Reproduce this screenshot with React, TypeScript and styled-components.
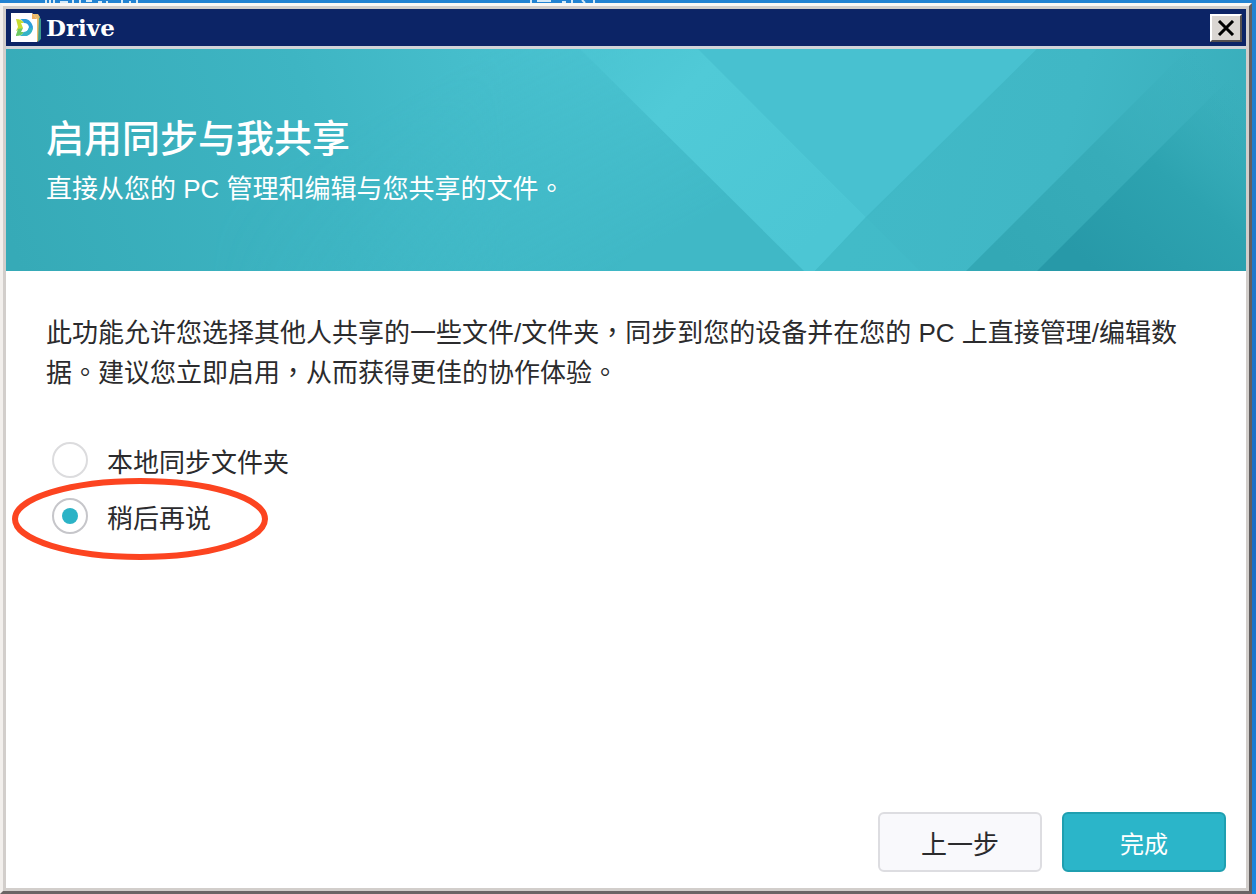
import React, { useState } from "react";
import styled, { createGlobalStyle } from "styled-components";

const GlobalStyle = createGlobalStyle`
  *, *::before, *::after { box-sizing: border-box; }
  body {
    margin: 0;
    font-family: "Liberation Sans", "Noto Sans CJK TC", sans-serif;
    color: #2b2b2d;
  }
  button, input { font: inherit; }
`;

const Desktop = styled.div`
  display: flex;
  flex-direction: column;
  min-height: 100vh;
  padding-right: 4px;
  background: linear-gradient(#2383d2, #1c6cc4 60%, #1c86dc);
`;

const DesktopStrip = styled.svg`
  display: block;
  width: 100%;
  height: 3px;
`;

const Window = styled.main`
  flex: 1;
  display: flex;
  flex-direction: column;
  background: #fff;
  border: 3px solid #d4d0cc;
  border-top-color: #fbf8f5;
  border-left-color: #f2efec;
  border-right-color: #625e5e;
  border-bottom-color: #6a6464;
`;

const Frame = styled.div`
  flex: 1;
  display: flex;
  flex-direction: column;
  border: 3px solid #d2cecb;
`;

const TitleBar = styled.header`
  display: flex;
  align-items: center;
  gap: 4px;
  height: 40px;
  padding: 0 4px;
  background: #0c2466;
  border-bottom: 3px solid #d2d4d8;
`;

const WindowTitle = styled.span`
  flex: 1;
  color: #fff;
  font-family: "DejaVu Serif", serif;
  font-size: 23px;
  font-weight: 700;
  line-height: 28px;
`;

const CloseButton = styled.button`
  display: grid;
  place-items: center;
  width: 32px;
  height: 28px;
  padding: 0;
  background: #dad6d2;
  border: 2px solid #fff;
  border-right-color: #55504f;
  border-bottom-color: #55504f;
`;

const Hero = styled.section`
  display: grid;
  height: 222px;
  overflow: hidden;
  background: #3eb6c4;
`;

const HeroArt = styled.svg`
  grid-area: 1 / 1;
  width: 100%;
  height: 222px;
`;

const HeroText = styled.div`
  grid-area: 1 / 1;
  display: flex;
  flex-direction: column;
  gap: 4px;
  padding: 64px 40px 0;
  color: #fff;
  z-index: 1;
`;

const Heading = styled.h1`
  margin: 0;
  font-size: 38px;
  font-weight: 500;
  line-height: 52px;
`;

const Text = styled.p`
  margin: 0;
  font-size: 26px;
  line-height: 40px;
`;

const Content = styled.section`
  flex: 1;
  padding: 42px 56px 20px 40px;
`;

const Options = styled.fieldset`
  display: flex;
  flex-direction: column;
  gap: 16px;
  margin: 0;
  padding: 47px 0 0 6px;
  border: 0;
`;

const Option = styled.label`
  position: relative;
  display: flex;
  align-items: center;
  align-self: flex-start;
  gap: 19px;
  height: 40px;
  font-size: 26px;
  line-height: 40px;
`;

const OptionText = styled.span`
  padding-top: 6px;
`;

const Radio = styled.input`
  appearance: none;
  display: grid;
  place-items: center;
  width: 36px;
  height: 36px;
  margin: 0;
  background: #fff;
  border: 2px solid #dcdcde;
  border-radius: 50%;

  &:checked { border-color: #c6c6ca; }
  &:checked::before {
    content: "";
    width: 16px;
    height: 16px;
    border-radius: 50%;
    background: #2bb3c6;
  }
`;

const Marker = styled.svg`
  position: absolute;
  left: -40px;
  top: -19px;
  width: 256px;
  height: 84px;
  pointer-events: none;
`;

const Footer = styled.footer`
  display: flex;
  justify-content: flex-end;
  gap: 20px;
  padding: 0 20px 16px;
`;

const Button = styled.button<{ $primary?: boolean }>`
  width: 164px;
  height: 60px;
  padding: 0;
  border: 2px solid ${(p) => (p.$primary ? "#1f9fb0" : "#dddde1")};
  border-radius: 6px;
  background: ${(p) => (p.$primary ? "#2bb5c9" : "#f9f9fc")};
  color: ${(p) => (p.$primary ? "#fff" : "#2b2b2d")};
  font-size: ${(p) => (p.$primary ? "24px" : "26px")};
`;

const DriveLogo = () => (
  <svg width="32" height="30" viewBox="0 0 32 30" aria-hidden="true">
    <path d="M22 1h6l2 3v22l-3 3h-5z" fill="#e8bc6c" />
    <path d="M29 4l2 2v20l-3 3z" fill="#3a9a8c" />
    <path d="M1 0h21l5 6v23H1z" fill="#fff" />
    <path d="M22 0l5 6h-5z" fill="#f0b060" />
    <path d="M6 6c4 0 6 1 8 4h-3l2 5-7 3 2-4z" fill="#c8dc30" />
    <path d="M6 22l2-6 5-1-2 4h3c-2 3-4 4-8 4z" fill="#6cc860" />
    <path d="M10 6h6c4 1 6 4 7 8-1 5-3 8-7 9h-6c2-1 3-2 4-4 3 0 4-2 5-5-1-3-2-4-5-4-1-2-2-3-4-4z" fill="#2c9fdc" />
    <path d="M10 23c2-1 3-2 4-4 2 0 4-1 5-4h4c-1 5-3 7-7 8z" fill="#34b4c8" />
  </svg>
);

const HeroPattern = () => (
  <HeroArt viewBox="0 0 1240 222" preserveAspectRatio="xMaxYMid slice" aria-hidden="true">
    <defs>
      <linearGradient id="base" gradientUnits="userSpaceOnUse" x1="0" y1="180" x2="620" y2="-20">
        <stop offset="0" stopColor="#36aab7" />
        <stop offset="0.5" stopColor="#3eb5c3" />
        <stop offset="1" stopColor="#4dc6d4" />
      </linearGradient>
      <linearGradient id="shade" gradientUnits="userSpaceOnUse" x1="480" y1="0" x2="600" y2="222">
        <stop offset="0" stopColor="#3fb7c5" stopOpacity="0" />
        <stop offset="1" stopColor="#3fb7c5" />
      </linearGradient>
      <linearGradient id="band" gradientUnits="userSpaceOnUse" x1="600" y1="0" x2="800" y2="200">
        <stop offset="0" stopColor="#50cad7" stopOpacity="0.4" />
        <stop offset="0.3" stopColor="#50cad7" />
        <stop offset="1" stopColor="#4cc6d4" />
      </linearGradient>
      <linearGradient id="right" gradientUnits="userSpaceOnUse" x1="900" y1="0" x2="1240" y2="100">
        <stop offset="0" stopColor="#41b9c7" />
        <stop offset="0.5" stopColor="#40b7c5" />
        <stop offset="1" stopColor="#39aebb" />
      </linearGradient>
      <linearGradient id="fold" gradientUnits="userSpaceOnUse" x1="1010" y1="222" x2="1210" y2="20">
        <stop offset="0" stopColor="#33a8b5" />
        <stop offset="0.5" stopColor="#37acb9" />
        <stop offset="1" stopColor="#39aebb" stopOpacity="0" />
      </linearGradient>
      <linearGradient id="corner" gradientUnits="userSpaceOnUse" x1="1090" y1="222" x2="1240" y2="40">
        <stop offset="0" stopColor="#2799a8" />
        <stop offset="0.5" stopColor="#2da3b0" />
        <stop offset="1" stopColor="#36acb8" stopOpacity="0" />
      </linearGradient>
      <linearGradient id="shadeReach" x1="0" y1="0" x2="1" y2="0">
        <stop offset="0" stopColor="#000" />
        <stop offset="1" stopColor="#fff" />
      </linearGradient>
      <mask id="shadeMask" maskUnits="userSpaceOnUse" x="0" y="0" width="1240" height="222">
        <rect x="200" width="300" height="222" fill="url(#shadeReach)" />
        <rect x="500" width="740" height="222" fill="#fff" />
      </mask>
    </defs>
    <rect width="1240" height="222" fill="url(#base)" />
    <rect width="1240" height="222" fill="url(#shade)" mask="url(#shadeMask)" opacity="0.9" />
    <path d="M692 0H1031L860 168z" fill="#48c1d0" />
    <path d="M574 0H692L860 168L809 222H798z" fill="url(#band)" />
    <path d="M1031 0H1240V222H809z" fill="url(#right)" />
    <path d="M860 168L914 222H809z" fill="#44bdcb" opacity="0.4" />
    <path d="M1182 0H1240V222H960z" fill="url(#fold)" />
    <path d="M1240 13V222H1031z" fill="url(#corner)" />
  </HeroArt>
);

export default function App() {
  const [choice, setChoice] = useState("later");
  return (
    <>
      <GlobalStyle />
      <Desktop>
        <DesktopStrip aria-hidden="true">
          <path
            d="M46 0v3M50 0v3M54 0v3M60 2h8M73 0v3M80 0v3M86 1h6M98 2h4M106 2h2M122 0v3M130 1v2M137 0v3M531 0v3M537 1h14M562 2h4M572 0v3M582 0l3 3M594 0v3"
            stroke="#d5e9f8"
            strokeWidth="2"
            fill="none"
          />
        </DesktopStrip>
        <Window>
          <Frame>
            <TitleBar>
              <DriveLogo />
              <WindowTitle>Drive</WindowTitle>
              <CloseButton type="button" aria-label="关闭">
                <svg width="18" height="16" viewBox="0 0 18 16" aria-hidden="true">
                  <path d="M2 1l14 14M16 1L2 15" stroke="#000" strokeWidth="3" />
                </svg>
              </CloseButton>
            </TitleBar>
            <Hero>
              <HeroPattern />
              <HeroText>
                <Heading>启用同步与我共享</Heading>
                <Text>直接从您的 PC 管理和编辑与您共享的文件。</Text>
              </HeroText>
            </Hero>
            <Content>
              <Text>
                此功能允许您选择其他人共享的一些文件/文件夹，同步到您的设备并在您的 PC 上直接管理/编辑数据。建议您立即启用，从而获得更佳的协作体验。
              </Text>
              <Options aria-label="同步选项">
                <Option>
                  <Radio
                    type="radio"
                    name="sync"
                    checked={choice === "local"}
                    onChange={() => setChoice("local")}
                  />
                  <OptionText>本地同步文件夹</OptionText>
                </Option>
                <Option>
                  <Radio
                    type="radio"
                    name="sync"
                    checked={choice === "later"}
                    onChange={() => setChoice("later")}
                  />
                  <OptionText>稍后再说</OptionText>
                  <Marker viewBox="0 0 256 84" aria-hidden="true">
                    <ellipse cx="128" cy="42" rx="125" ry="38" fill="none" stroke="#fc4420" strokeWidth="6" />
                  </Marker>
                </Option>
              </Options>
            </Content>
            <Footer>
              <Button type="button">上一步</Button>
              <Button type="button" $primary>
                完成
              </Button>
            </Footer>
          </Frame>
        </Window>
      </Desktop>
    </>
  );
}
